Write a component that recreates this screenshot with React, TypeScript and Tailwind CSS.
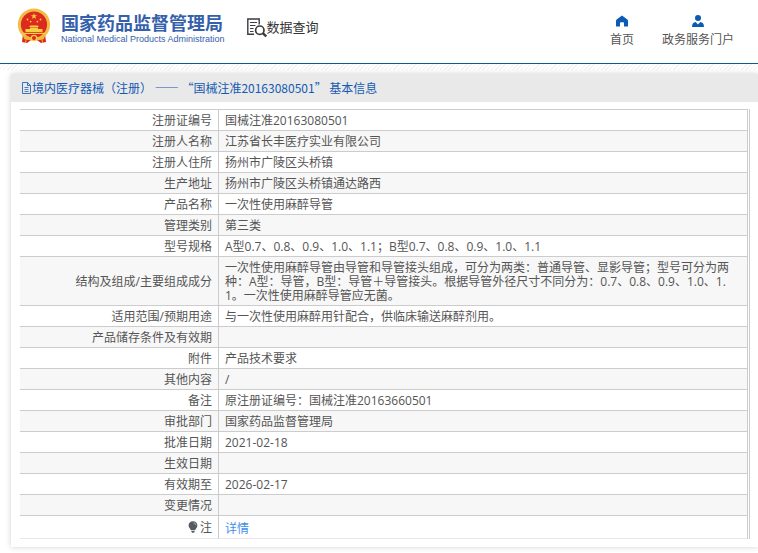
import type { ReactNode } from 'react';

interface InfoRow {
  label: string;
  value?: ReactNode;
}

const rows: InfoRow[] = [
  { label: '注册证编号', value: '国械注准20163080501' },
  { label: '注册人名称', value: '江苏省长丰医疗实业有限公司' },
  { label: '注册人住所', value: '扬州市广陵区头桥镇' },
  { label: '生产地址', value: '扬州市广陵区头桥镇通达路西' },
  { label: '产品名称', value: '一次性使用麻醉导管' },
  { label: '管理类别', value: '第三类' },
  { label: '型号规格', value: 'A型0.7、0.8、0.9、1.0、1.1；B型0.7、0.8、0.9、1.0、1.1' },
  {
    label: '结构及组成/主要组成成分',
    value:
      '一次性使用麻醉导管由导管和导管接头组成，可分为两类：普通导管、显影导管；型号可分为两种：A型：导管，B型：导管＋导管接头。根据导管外径尺寸不同分为：0.7、0.8、0.9、1.0、1.1。一次性使用麻醉导管应无菌。',
  },
  { label: '适用范围/预期用途', value: '与一次性使用麻醉用针配合，供临床输送麻醉剂用。' },
  { label: '产品储存条件及有效期' },
  { label: '附件', value: '产品技术要求' },
  { label: '其他内容', value: '/' },
  { label: '备注', value: '原注册证编号：国械注准20163660501' },
  { label: '审批部门', value: '国家药品监督管理局' },
  { label: '批准日期', value: '2021-02-18' },
  { label: '生效日期' },
  { label: '有效期至', value: '2026-02-17' },
  { label: '变更情况' },
];

function Emblem() {
  return (
    <svg width="34" height="36" viewBox="0 0 34 36" aria-hidden="true">
      <path d="M6 26 L5 34 L10 35 L14 32 H20 L24 35 L29 34 L28 26 Z" fill="#d9271c" />
      <circle cx="17" cy="16.5" r="14.6" fill="#dc2a1e" stroke="#f2bd45" strokeWidth="3" />
      <path d="M17 5 L17.8 7.2 L20.2 7.2 L18.3 8.6 L19 10.9 L17 9.5 L15 10.9 L15.7 8.6 L13.8 7.2 L16.2 7.2 Z" fill="#f7cf45" />
      <g fill="#f7cf45">
        <circle cx="10.5" cy="11.5" r="0.9" />
        <circle cx="13.6" cy="13.6" r="0.9" />
        <circle cx="20.4" cy="13.6" r="0.9" />
        <circle cx="23.5" cy="11.5" r="0.9" />
        <path d="M12 19 L13.5 17.5 H20.5 L22 19 Z" />
        <path d="M13 19.6 H21 V21 H25.5 V24 H8.5 V21 H13 Z" />
        <path d="M6 24.8 H28 V26 H6 Z" />
      </g>
      <path d="M6 27 C10 30 13 30.5 14.5 29.5 L17 27.5 L19.5 29.5 C21 30.5 24 30 28 27 L27 31 C23 32.5 20 32 17 30.5 C14 32 11 32.5 7 31 Z" fill="#efb53a" />
      <circle cx="17" cy="30" r="2.6" fill="#d9271c" stroke="#f7cf45" strokeWidth="1.2" />
      <path d="M9 31.5 L8.5 35 M25 31.5 L25.5 35" stroke="#efb53a" strokeWidth="1" />
    </svg>
  );
}

function SearchDocIcon() {
  return (
    <svg width="20" height="20" viewBox="0 0 20 20" fill="none" stroke="#3a3a40" aria-hidden="true">
      <path d="M7 16.3 H0.8 V1 H12.2 V6.5" strokeWidth="1.4" />
      <path d="M3 4.5 H10 M3 7.5 H8.5 M3 10.5 H6.5 M3 13.5 H6.5" strokeWidth="1.2" />
      <circle cx="12.8" cy="12.2" r="4.2" strokeWidth="1.7" />
      <path d="M15.8 15.2 L19.2 18.5" strokeWidth="2.4" />
    </svg>
  );
}

function HomeIcon() {
  return (
    <svg width="12" height="12" viewBox="0 0 12 12" fill="#0b5bb5" aria-hidden="true">
      <path d="M6 0.4 L11.4 4.6 C11.8 5 12 5.4 12 6 V11 Q12 11.6 11.4 11.6 H8 V8 Q8 7.2 7.2 7.2 H4.8 Q4 7.2 4 8 V11.6 H0.6 Q0 11.6 0 11 V6 C0 5.4 0.2 5 0.6 4.6 Z" />
    </svg>
  );
}

function UserIcon() {
  return (
    <svg width="12" height="12" viewBox="0 0 12 12" fill="#0b5bb5" aria-hidden="true">
      <circle cx="6" cy="3" r="3" />
      <path d="M0 12 C0 8.6 1.6 7.2 3.6 7 L6 9.6 L8.4 7 C10.4 7.2 12 8.6 12 12 Z" />
    </svg>
  );
}

function DocIcon() {
  return (
    <svg width="11" height="12" viewBox="0 0 11 12" fill="none" stroke="#2566b5" aria-hidden="true">
      <path d="M1.5 0.5 H6.5 L9.5 3.5 V11.5 H1.5 Z M6.5 0.5 V3.5 H9.5" strokeWidth="0.9" />
      <path d="M3.5 5.5 H7.5 M3.5 7.5 H7.5 M3.5 9.5 H7.5" strokeWidth="0.8" />
    </svg>
  );
}

function BulbIcon() {
  return (
    <svg width="10" height="12" viewBox="0 0 10 12" aria-hidden="true">
      <path d="M5 0.3 C2.3 0.3 0.6 2.2 0.6 4.5 C0.6 6.6 2.4 7.6 3 9.3 H7 C7.6 7.6 9.4 6.6 9.4 4.5 C9.4 2.2 7.7 0.3 5 0.3 Z" fill="#555a63" />
      <path d="M3.4 10 H6.6 V11 L5.6 11.8 H4.4 L3.4 11 Z" fill="#555a63" />
      <path d="M5.6 1.8 C7 2 7.8 3 7.9 4.2" stroke="#d5d7da" strokeWidth="0.8" fill="none" />
    </svg>
  );
}

const labelCell = 'w-[199px] border-t border-r border-t-[#ccc] border-r-[#ccc] pr-[6px] text-right font-normal';
const valueCell = 'border-t border-t-[#ccc] break-all pr-4 pl-[6px]';

export default function App() {
  return (
    <div
      lang="zh-CN"
      className="min-h-screen bg-white font-['Open_Sans','Noto_Sans_CJK_SC',sans-serif] text-[12px] text-[#555] [text-spacing-trim:space-all]"
    >
      <header className="flex h-16 items-start justify-between border-b border-[#0f5a8c] pr-6 pl-[17px]">
        <div className="flex">
          <a href="#" className="flex gap-[10px] pt-2 text-[#3560ac]">
            <Emblem />
            <span className="flex flex-col pt-1">
              <span className="font-['Noto_Sans_CJK_SC',sans-serif] text-[18px] leading-[21px] font-bold">国家药品监督管理局</span>
              <span className="font-['Liberation_Sans',sans-serif] text-[9px] leading-[12px]">
                National Medical Products Administration
              </span>
            </span>
          </a>
          <a href="#" className="ml-[22px] flex pt-[18px] text-[13px] leading-[18px] text-[#333]">
            <SearchDocIcon />
            数据查询
          </a>
        </div>
        <nav className="flex gap-7 pt-[15px] leading-[16px] text-[#555]">
          <a href="#" className="flex flex-col items-center gap-[5px]">
            <HomeIcon />
            首页
          </a>
          <a href="#" className="flex flex-col items-center gap-[5px]">
            <UserIcon />
            政务服务门户
          </a>
        </nav>
      </header>

      <main className="bg-[repeating-linear-gradient(135deg,#f3f3f3_0px,#f3f3f3_1px,#fff_1px,#fff_3px)] bg-[length:100%_6px] bg-no-repeat pt-[10px] pb-[6px] pl-[11px]">
        <section className="bg-white pb-2 shadow-[0_0_6px_rgba(0,0,0,0.18)]">
          <h1 className="flex h-7 items-center bg-[#e9e9e9] pl-[10px] font-['Noto_Sans_CJK_SC',sans-serif] text-[12px] text-[#1459b3]">
            <DocIcon />
            <span className="whitespace-pre">境内医疗器械（注册） —— “国械注准20163080501” 基本信息</span>
          </h1>
          <div className="mt-[7px] mr-2 ml-[9px] border-r border-[#ccc] pr-px">
            <table className="w-full table-fixed border-separate border-spacing-0 border-r border-[#ccc] leading-[14px]">
              <tbody>
                {rows.map((row, i) => (
                  <tr key={row.label} className={i % 2 ? 'bg-[#f7f7f7]' : 'bg-white'}>
                    <th scope="row" className={`${labelCell} pt-1 pb-[2px]`}>
                      {row.label}
                    </th>
                    <td className={`${valueCell} pt-1 pb-[2px]`}>{row.value}</td>
                  </tr>
                ))}
                <tr>
                  <th scope="row" className={`${labelCell} border-b border-b-[#e8e8e8] pt-[5px] pb-[3px]`}>
                    <span className="flex justify-end gap-[2px]">
                      <BulbIcon />
                      注
                    </span>
                  </th>
                  <td className={`${valueCell} border-b border-b-[#e8e8e8] pt-[6px] pb-[2px]`}>
                    <a href="#" className="text-[#3f8fe8]">
                      详情
                    </a>
                  </td>
                </tr>
              </tbody>
            </table>
          </div>
        </section>
      </main>
    </div>
  );
}
